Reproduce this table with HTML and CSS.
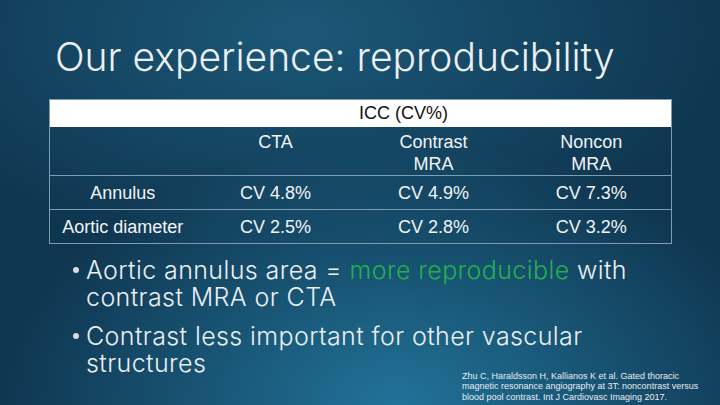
FILE: index.html
```html
<!DOCTYPE html>
<html>
<head>
<meta charset="utf-8">
<link rel="stylesheet" href="styles.css">
</head>
<body>
<div class="slide">
  <h1 class="title">Our experience: reproducibility</h1>
  <table class="data">
    <colgroup>
      <col class="c1"><col class="c2"><col class="c3"><col class="c4">
    </colgroup>
    <tr class="top">
      <td colspan="4">ICC (CV%)</td>
    </tr>
    <tr class="heads">
      <td></td>
      <td>CTA</td>
      <td>Contrast<br>MRA</td>
      <td>Noncon<br>MRA</td>
    </tr>
    <tr class="row">
      <td>Annulus</td>
      <td>CV 4.8%</td>
      <td>CV 4.9%</td>
      <td>CV 7.3%</td>
    </tr>
    <tr class="row">
      <td>Aortic diameter</td>
      <td>CV 2.5%</td>
      <td>CV 2.8%</td>
      <td>CV 3.2%</td>
    </tr>
  </table>
  <div class="bottom">
    <ul class="bullets">
      <li><span>Aortic annulus area = </span><span class="green">more reproducible</span><span> with</span><br><span>contrast MRA or CTA</span></li>
      <li><span>Contrast less important for other vascular</span><br><span>structures</span></li>
    </ul>
    <p class="cite">Zhu C, Haraldsson H, Kallianos K et al. Gated thoracic<br>magnetic resonance angiography at 3T: noncontrast versus<br>blood pool contrast. Int J Cardiovasc Imaging 2017.</p>
  </div>
</div>
</body>
</html>
```

FILE: styles.css
```css
html, body {
  margin: 0;
  padding: 0;
}
.slide {
  width: 720px;
  height: 405px;
  overflow: hidden;
  box-sizing: border-box;
  display: flex;
  flex-direction: column;
  color: #f2f4f5;
  font-family: "Liberation Sans", Arial, sans-serif;
  background:
    radial-gradient(ellipse 55% 65% at 55% 100%, rgba(34,118,156,0.95) 0%, rgba(34,118,156,0) 100%),
    radial-gradient(ellipse 60% 55% at 42% 8%, rgba(27,88,120,1) 0%, rgba(27,88,120,0) 100%),
    #0f3650;
}
.title {
  margin: 0;
  padding: 33px 0 0 55px;
  height: 66px;
  font-family: Inter, Roboto, "Liberation Sans", sans-serif;
  font-weight: 300;
  font-size: 39px;
  line-height: 48px;
  color: #eceff2;
  white-space: nowrap;
}
.data {
  margin-left: 49px;
  width: 622px;
  border-collapse: collapse;
  table-layout: fixed;
  border: 1px solid #7f9db2;
  font-size: 18px;
}
.c1 { width: 146px; }
.c2 { width: 160px; }
.c3 { width: 156px; }
.c4 { width: 160px; }
.data td {
  padding: 0;
  text-align: center;
}
.top td {
  background: #ffffff;
  color: #111;
  height: 27px;
  padding-left: 86px;
  line-height: 27px;
}
.heads td {
  height: 47px;
  vertical-align: top;
  line-height: 22px;
  padding-top: 4px;
  box-sizing: border-box;
  border-bottom: 1px solid #7f9db2;
}
.row td {
  height: 33px;
  line-height: 20px;
  vertical-align: middle;
  border-bottom: 1px solid #7f9db2;
}
.bottom {
  flex: 1;
  display: grid;
  grid-template-rows: 1fr;
  margin-top: 13px;
}
.bullets, .cite {
  grid-area: 1 / 1;
}
.bullets {
  margin: 0;
  padding: 0 0 0 86px;
  width: 575px;
  list-style: none;
  font-family: Inter, Roboto, "Liberation Sans", sans-serif;
  font-weight: 300;
  font-size: 25px;
  letter-spacing: 0.4px;
  line-height: 27px;
  color: #eceff2;
}
.bullets li {
  position: relative;
  margin-bottom: 12px;
}
.bullets li:last-child {
  margin-bottom: 0;
}
.bullets li::before {
  content: "";
  position: absolute;
  left: -13px;
  top: 10px;
  width: 6px;
  height: 6px;
  border-radius: 50%;
  background: #d7dde2;
}
.green {
  color: #22b04f;
}
.cite {
  justify-self: end;
  align-self: end;
  margin: 0 8px 3px 0;
  width: 250px;
  font-size: 9px;
  line-height: 10.5px;
  color: #e8edf0;
}
```
